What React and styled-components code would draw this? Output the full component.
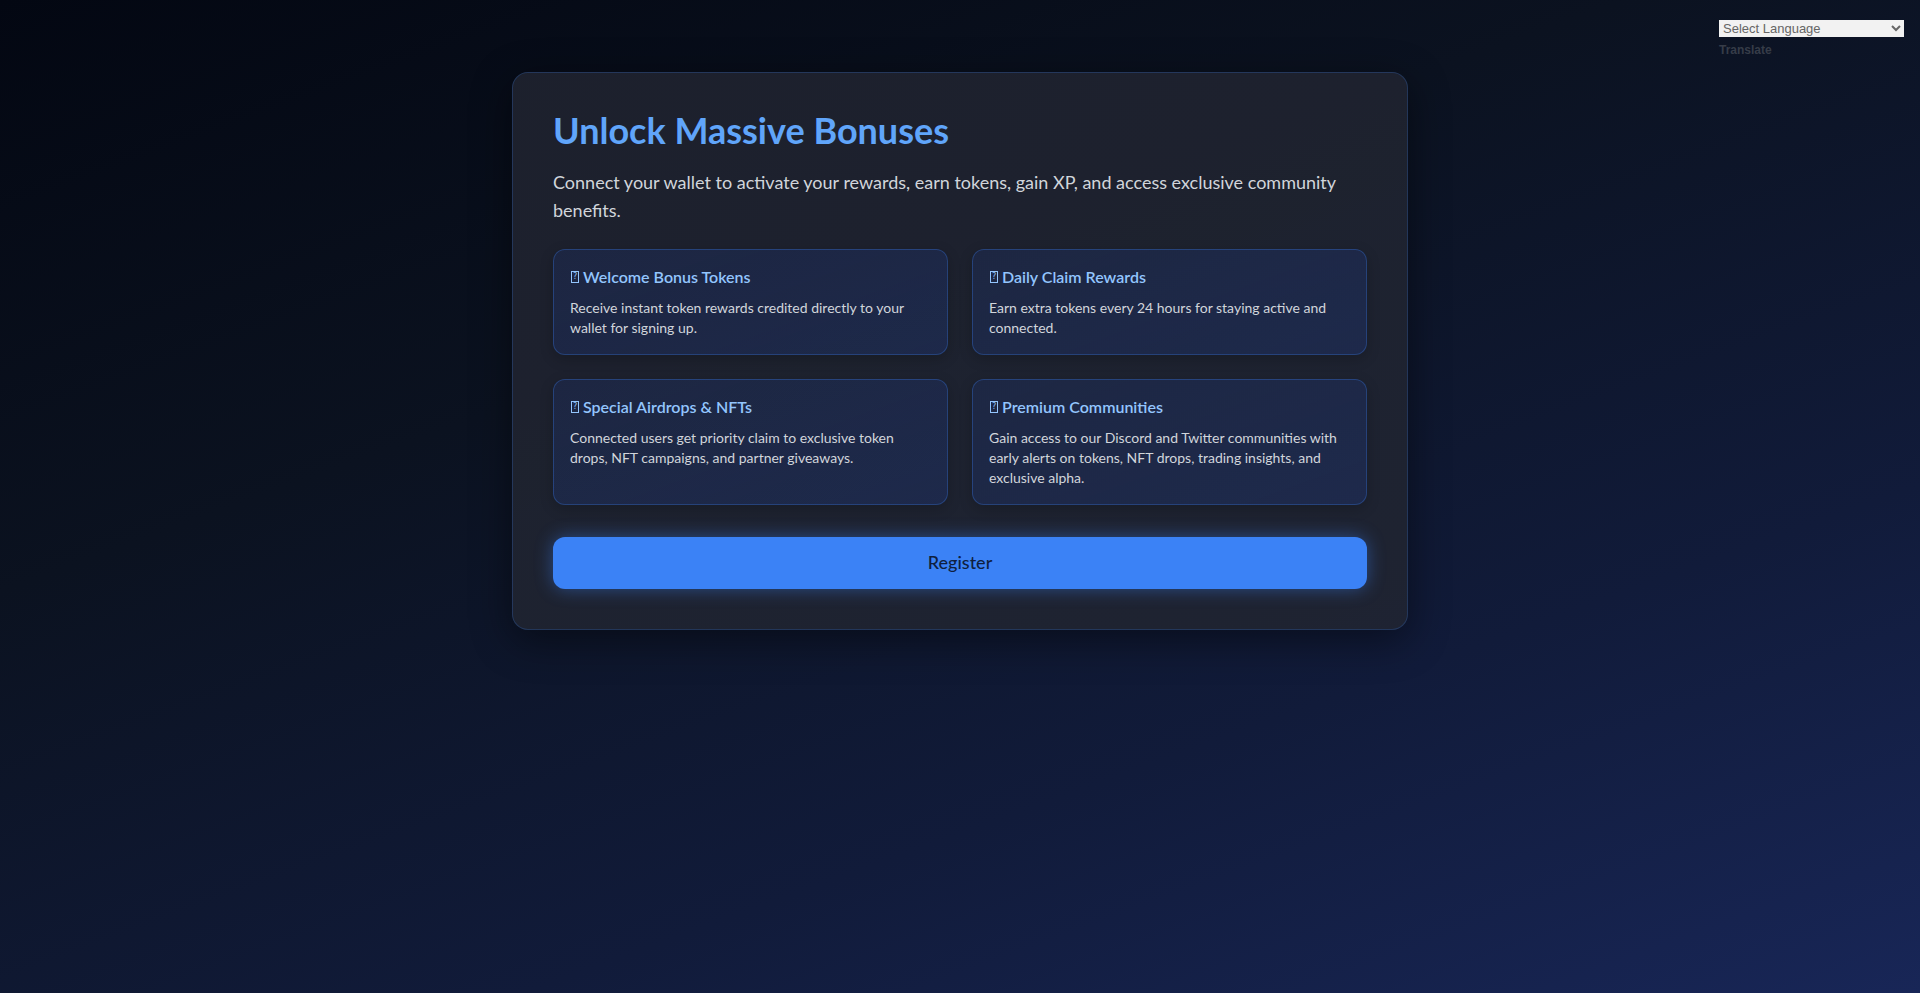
import styled, { createGlobalStyle } from "styled-components";

const GlobalStyle = createGlobalStyle`
  html, body {
    margin: 0;
    padding: 0;
  }
  body {
    min-height: 100vh;
    font-family: Lato, "Noto Sans", sans-serif;
    background: linear-gradient(160deg, #030712 0%, #0b1220 35%, #111b3a 70%, #182657 100%);
    background-attachment: fixed;
    color: #e5e7eb;
  }
`;

// the emoji in the original page show as missing-glyph boxes
const features = [
  {
    title: "Welcome Bonus Tokens",
    text: "Receive instant token rewards credited directly to your wallet for signing up.",
  },
  {
    title: "Daily Claim Rewards",
    text: "Earn extra tokens every 24 hours for staying active and connected.",
  },
  {
    title: "Special Airdrops & NFTs",
    text: "Connected users get priority claim to exclusive token drops, NFT campaigns, and partner giveaways.",
  },
  {
    title: "Premium Communities",
    text: "Gain access to our Discord and Twitter communities with early alerts on tokens, NFT drops, trading insights, and exclusive alpha.",
  },
];

export default function App() {
  return (
    <>
      <GlobalStyle />
      <TranslateWidget>
        <select defaultValue="">
          <option value="">Select Language</option>
          <option value="es">Spanish</option>
          <option value="fr">French</option>
        </select>
        <span>Translate</span>
      </TranslateWidget>
      <Page>
        <Card>
          <Title>Unlock Massive Bonuses</Title>
          <Subtitle>
            Connect your wallet to activate your rewards, earn tokens, gain XP,
            and access exclusive community benefits.
          </Subtitle>
          <FeatureGrid>
            {features.map((f) => (
              <Feature key={f.title}>
                <FeatureTitle>
                  <Tofu>?</Tofu>
                  {f.title}
                </FeatureTitle>
                <FeatureText>{f.text}</FeatureText>
              </Feature>
            ))}
          </FeatureGrid>
          <RegisterButton>Register</RegisterButton>
        </Card>
      </Page>
    </>
  );
}

const Page = styled.main`
  display: flex;
  justify-content: center;
  padding: 72px 16px;
`;

const TranslateWidget = styled.div`
  position: absolute;
  top: 20px;
  right: 16px;
  display: flex;
  flex-direction: column;
  gap: 6px;

  & select {
    width: 185px;
    height: 17px;
    padding: 0;
    border: none;
    border-radius: 0;
    background: #f2f2f2;
    color: #666;
    font-family: "Liberation Sans", Arial, sans-serif;
    font-size: 13px;
  }

  & span {
    font-family: "Liberation Sans", Arial, sans-serif;
    font-size: 12px;
    font-weight: bold;
    color: #363c48;
  }
`;

const Card = styled.section`
  width: 896px;
  box-sizing: border-box;
  padding: 35px 40px 40px;
  border-radius: 16px;
  border: 1px solid rgba(59, 130, 246, 0.22);
  background: linear-gradient(
    160deg,
    rgba(30, 34, 46, 0.95) 0%,
    rgba(32, 36, 50, 0.95) 100%
  );
  box-shadow: 0 10px 40px rgba(0, 0, 0, 0.45);
`;

const Title = styled.h1`
  margin: 0 0 16px;
  font-size: 36px;
  font-weight: 700;
  color: #60a5fa;
`;

const Subtitle = styled.p`
  margin: 0 0 25px;
  font-size: 18px;
  line-height: 28px;
  color: #d1d5db;
`;

const FeatureGrid = styled.div`
  display: grid;
  grid-template-columns: 1fr 1fr;
  gap: 24px;
  margin-bottom: 32px;
`;

const Feature = styled.div`
  padding: 16px;
  border-radius: 12px;
  border: 1px solid rgba(59, 130, 246, 0.3);
  background: linear-gradient(
    160deg,
    rgba(30, 58, 138, 0.22) 0%,
    rgba(30, 58, 138, 0.3) 100%
  );
  box-shadow: 0 4px 14px rgba(0, 0, 0, 0.2);
`;

const FeatureTitle = styled.h3`
  display: flex;
  align-items: center;
  gap: 4px;
  margin: 0 0 10px;
  font-size: 16px;
  font-weight: 600;
  line-height: 22px;
  color: #93c5fd;
`;

const Tofu = styled.span`
  display: inline-flex;
  align-items: center;
  justify-content: center;
  box-sizing: border-box;
  width: 8px;
  height: 12px;
  margin-left: 1px;
  border: 1px solid currentColor;
  font-family: "DejaVu Sans", sans-serif;
  font-size: 8px;
  font-weight: 400;
  line-height: 1;
`;

const FeatureText = styled.p`
  margin: 0;
  font-size: 14px;
  line-height: 20px;
  color: #d1d5db;
`;

const RegisterButton = styled.button`
  display: block;
  width: 100%;
  height: 52px;
  padding: 0 0 3px;
  border: none;
  border-radius: 12px;
  background: #3b82f6;
  color: #0f1f3f;
  font-family: Lato, "Noto Sans", sans-serif;
  font-size: 18px;
  font-weight: 500;
  cursor: pointer;
  box-shadow: 0 0 18px rgba(59, 130, 246, 0.45);
`;
